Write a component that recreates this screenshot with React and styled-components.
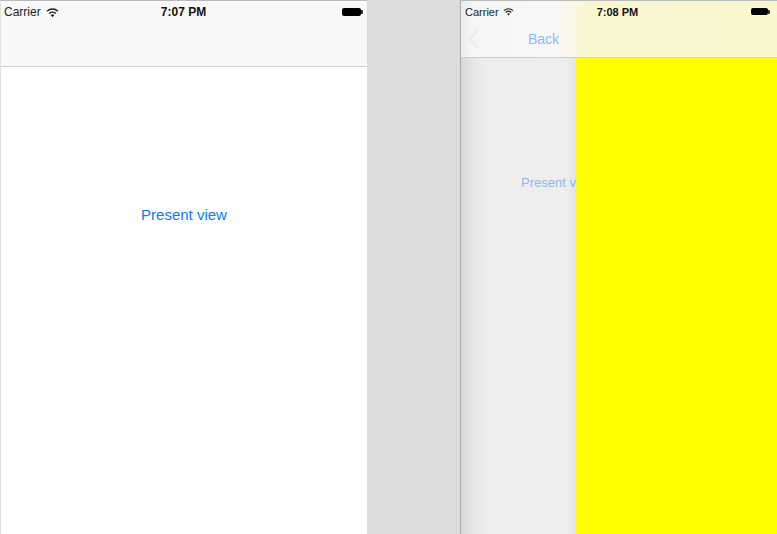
import React from 'react'
import styled, { createGlobalStyle } from 'styled-components'

const GlobalStyle = createGlobalStyle`
	html, body {
		margin: 0;
		padding: 0;
		background: #dcdcdc;
		font-family: "Liberation Sans", Arial, sans-serif;
	}
`

const Stage = styled.div`
	display: flex;
	width: 777px;
	height: 534px;
	overflow: hidden;
	background: #dcdcdc;
`

const Phone = styled.div`
	display: flex;
	flex-direction: column;
	width: ${({ $width }) => $width}px;
	flex-shrink: 0;
	height: 100%;
	margin-right: ${({ $gap }) => $gap || 0}px;
	border-top: 1px solid #b9b9b9;
	border-left: 1px solid ${({ $edge }) => $edge};
	box-sizing: border-box;
	background: #fff;
`

const Header = styled.div`
	display: flex;
	flex-direction: column;
	height: ${({ $height }) => $height}px;
	flex-shrink: 0;
	border-bottom: 1px solid #cfcfcf;
	box-sizing: border-box;
	background: ${({ $bg }) => $bg};
`

const StatusBar = styled.div`
	display: grid;
	grid-template-columns: 1fr auto 1fr;
	align-items: center;
	height: ${({ $h }) => $h}px;
	padding: 0 ${({ $pr }) => $pr}px 0 ${({ $pl }) => $pl}px;
	font-size: ${({ $size }) => $size}px;
	color: #222;
`

const Carrier = styled.div`
	display: flex;
	align-items: center;
	gap: ${({ $gap }) => $gap}px;
`

const Time = styled.div`
	font-weight: bold;
	color: #111;
`

const BatteryWrap = styled.div`
	display: flex;
	justify-content: flex-end;
	align-items: center;
`

const BatteryBody = styled.div`
	width: ${({ $w }) => $w}px;
	height: ${({ $h }) => $h}px;
	background: #000;
	border-radius: 2px;
`

const BatteryNub = styled.div`
	width: 2px;
	height: 4px;
	background: #333;
	border-radius: 0 1px 1px 0;
`

const NavRow = styled.div`
	flex: 1;
	display: flex;
	align-items: center;
	padding-left: 7px;
	gap: 49px;
	color: #8dbcf1;
	font-size: 14px;
	padding-bottom: 2px;
`

const LeftBody = styled.div`
	flex: 1;
	display: flex;
	justify-content: center;
	padding-top: 139px;
	background: #fff;
`

const LinkButton = styled.div`
	font-size: ${({ $size }) => $size || 15}px;
	color: ${({ $faded }) => ($faded ? '#8ab8ee' : '#0a7bfb')};
	white-space: nowrap;
`

const RightBody = styled.div`
	flex: 1;
	display: flex;
	min-height: 0;
`

const BehindView = styled.div`
	width: 115px;
	flex-shrink: 0;
	overflow: hidden;
	padding-left: 60px;
	padding-top: 117px;
	box-sizing: border-box;
	background: linear-gradient(to right, #d6d6d6 0px, #e8e8e8 14px, #eeeeee 28px, #eeeeee 104px, #e3e3e3 115px);
`

const Presented = styled.div`
	flex: 1;
	background: #ffff00;
`

function Wifi({ size }) {
	return (
		<svg width={size} height={size * 0.8} viewBox="0 0 12 9.6">
			<path d="M6 9.4 L4.3 7.5 A2.6 2.6 0 0 1 7.7 7.5 Z" fill="#222" />
			<path d="M2.9 6 A4.6 4.6 0 0 1 9.1 6" stroke="#222" strokeWidth="1.3" fill="none" />
			<path d="M1 3.9 A7.3 7.3 0 0 1 11 3.9" stroke="#222" strokeWidth="1.3" fill="none" />
		</svg>
	)
}

function Battery({ w, h }) {
	return (
		<BatteryWrap>
			<BatteryBody $w={w} $h={h} />
			<BatteryNub />
		</BatteryWrap>
	)
}

function Chevron() {
	return (
		<svg width="11" height="20" viewBox="0 0 11 20">
			<path d="M9.5 1.5 L1.5 10 L9.5 18.5" stroke="#e4ecf6" strokeWidth="2" fill="none" />
		</svg>
	)
}

export default function App() {
	return (
		<>
			<GlobalStyle />
			<Stage>
				<Phone $width={367} $gap={93} $edge="#e2e2e2">
					<Header $height={66} $bg="#f8f8f8">
						<StatusBar $h={22} $pl={3} $pr={4} $size={12}>
							<Carrier $gap={5}>
								Carrier <Wifi size={13} />
							</Carrier>
							<Time>7:07 PM</Time>
							<Battery w={19} h={8} />
						</StatusBar>
					</Header>
					<LeftBody>
						<LinkButton>Present view</LinkButton>
					</LeftBody>
				</Phone>

				<Phone $width={317} $edge="#a9a9a9">
					<Header
						$height={57}
						$bg="linear-gradient(to right, #ececec 0px, #f6f6f6 12px, #f7f7f7 95px, #f9f8d2 125px, #f9f8cf 100%)"
					>
						<StatusBar $h={21} $pl={4} $pr={7} $size={11}>
							<Carrier $gap={4}>
								Carrier <Wifi size={11} />
							</Carrier>
							<Time>7:08 PM</Time>
							<Battery w={17} h={7} />
						</StatusBar>
						<NavRow>
							<Chevron />
							<span>Back</span>
						</NavRow>
					</Header>
					<RightBody>
						<BehindView>
							<LinkButton $faded $size={13}>Present view</LinkButton>
						</BehindView>
						<Presented />
					</RightBody>
				</Phone>
			</Stage>
		</>
	)
}
